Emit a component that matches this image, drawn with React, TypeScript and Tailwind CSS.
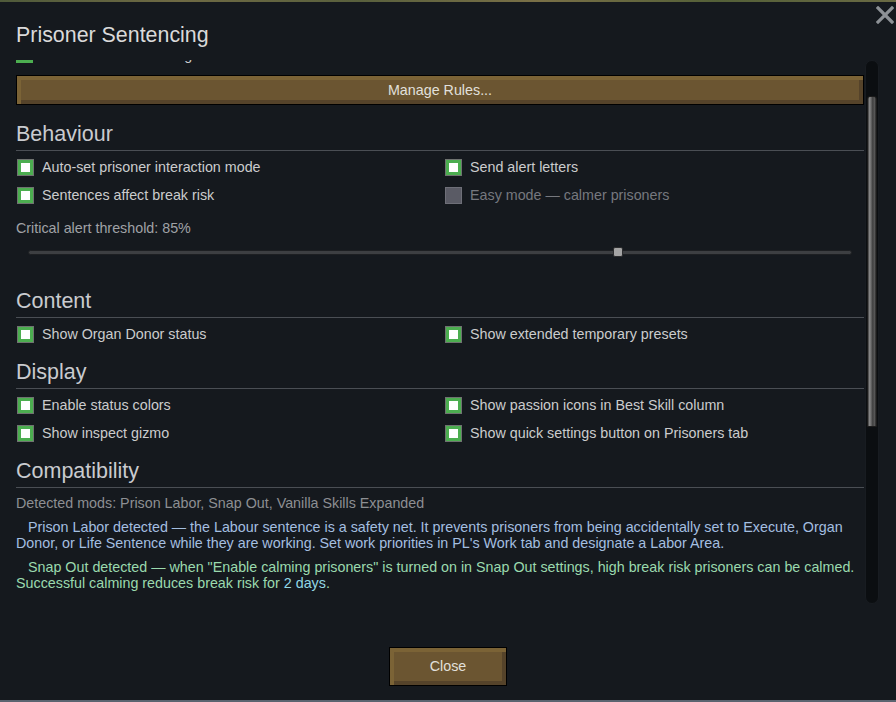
import type { ReactNode } from 'react'

function Box({ on = true, disabled = false }: { on?: boolean; disabled?: boolean }) {
    if (disabled) {
        return <span className="ml-px w-[17px] h-[17px] shrink-0 border border-[#6e6f78] bg-[#5a5b65]" />
    }
    return (
        <span className="ml-px w-[17px] h-[17px] shrink-0 border border-[#6f7370] bg-[#4cae50] flex items-center justify-center">
            {on && <span className="w-[9px] h-[9px] bg-white" />}
        </span>
    )
}

function Row({ label, disabled = false }: { label: string; disabled?: boolean }) {
    return (
        <div className="h-7 flex items-center gap-2">
            <Box disabled={disabled} />
            <span className={disabled ? 'text-[#76787e]' : 'text-[#cbcccd]'}>{label}</span>
        </div>
    )
}

function Section({ title, className = '', children }: { title: string; className?: string; children?: ReactNode }) {
    return (
        <div className={className}>
            <div className="text-[21.5px] leading-[26px] text-[#c9cbcf]">{title}</div>
            <div className="mt-[3px] h-px bg-[#4a4e54]" />
            {children}
        </div>
    )
}

function Pair({ left, right }: { left: ReactNode; right: ReactNode }) {
    return (
        <div className="grid grid-cols-[428px_1fr]">
            {left}
            {right}
        </div>
    )
}

function RimButton({ label, className = '' }: { label: string; className?: string }) {
    return (
        <button
            className={`border border-black bg-[#6b5531] text-[14.3px] text-[#e2e0dc] shadow-[inset_4px_4px_0_#7b6336,inset_-4px_-4px_0_#55432a] flex items-center justify-center ${className}`}
        >
            {label}
        </button>
    )
}

export default function App() {
    return (
        <div className="w-[896px] h-[702px] bg-[#15191e] flex flex-col relative overflow-hidden font-['Liberation_Sans',Arial,sans-serif] text-[14.3px]">
            {/* map texture peeking above the window */}
            <div className="h-[2px] bg-[linear-gradient(90deg,#4f5a3a,#6f6a44_20%,#59603d_40%,#7a7047_60%,#546038_80%,#6a6a44)]" />

            {/* Title */}
            <div className="h-[58px] px-4 pt-5">
                <div className="text-[21.4px] leading-[26px] text-[#dadada]">Prisoner Sentencing</div>
            </div>

            {/* Scroll view */}
            <div className="h-[544px] pl-4 flex">
                <div className="w-[848px] overflow-hidden leading-5">
                    {/* row scrolled out of view */}
                    <div className="-mt-[14px] h-[17px] flex items-center gap-2">
                        <span className="w-[17px] h-[17px] bg-[#4cae50]" />
                        <span className="ml-px text-[#cbcccd]">Enable auto-sentencing</span>
                    </div>

                    <RimButton label="Manage Rules..." className="mt-3 w-full h-[30px]" />

                    <Section title="Behaviour" className="mt-4">
                        <div className="mt-[2px]">
                            <Pair left={<Row label="Auto-set prisoner interaction mode" />} right={<Row label="Send alert letters" />} />
                            <Pair
                                left={<Row label="Sentences affect break risk" />}
                                right={<Row label="Easy mode — calmer prisoners" disabled />}
                            />
                        </div>
                        <div className="mt-[9px] h-5 text-[#a0a2a6]">Critical alert threshold: 85%</div>
                        <div className="mt-[6px] h-4 px-3 flex items-center">
                            <div className="relative w-full h-[5px] rounded-full bg-[#3d3f42] border border-[#1d1f22]">
                                <div className="absolute left-[584px] top-1/2 -translate-y-1/2 w-[10px] h-[10px] rounded-[2px] bg-[#a4a4a4] border border-[#2b2c2e]" />
                            </div>
                        </div>
                    </Section>

                    <Section title="Content" className="mt-[28px]">
                        <div className="mt-[2px]">
                            <Pair left={<Row label="Show Organ Donor status" />} right={<Row label="Show extended temporary presets" />} />
                        </div>
                    </Section>

                    <Section title="Display" className="mt-[11px]">
                        <div className="mt-[2px]">
                            <Pair left={<Row label="Enable status colors" />} right={<Row label="Show passion icons in Best Skill column" />} />
                            <Pair left={<Row label="Show inspect gizmo" />} right={<Row label="Show quick settings button on Prisoners tab" />} />
                        </div>
                    </Section>

                    <Section title="Compatibility" className="mt-[11px]">
                        <div className="mt-[5px] h-5 text-[#8d8f93]">Detected mods: Prison Labor, Snap Out, Vanilla Skills Expanded</div>
                        <p className="mt-[6px] leading-4 indent-3 text-[#a4bfe0]">
                            Prison Labor detected — the Labour sentence is a safety net. It prevents prisoners from being accidentally set to Execute, Organ
                            Donor, or Life Sentence while they are working. Set work priorities in PL's Work tab and designate a Labor Area.
                        </p>
                        <p className="mt-2 leading-4 indent-3 text-[#9bdaae]">
                            Snap Out detected — when "Enable calming prisoners" is turned on in Snap Out settings, high break risk prisoners can be calmed.
                            Successful calming reduces break risk for <span className="text-[#92d6e4]">2 days</span>.
                        </p>
                    </Section>
                </div>

                {/* Scrollbar */}
                <div className="ml-px w-[14px] h-full rounded-full bg-[#0b0e11] border border-[#181c21] flex flex-col items-center pt-[35px]">
                    <div className="w-[10px] h-[331px] rounded-t-[3px] border border-[#1c1c1c] bg-[linear-gradient(90deg,#3a3a3a,#8a8a8a_20%,#666_40%,#3e3e3e_60%,#5a5a5a_80%,#262626)]" />
                </div>
            </div>

            {/* Footer */}
            <div className="flex-1 flex justify-center pt-[43px]">
                <RimButton label="Close" className="w-[118px] h-[39px]" />
            </div>
            <div className="h-[2px] bg-[#5b6470]" />

            {/* Close X */}
            <svg className="absolute left-[876px] top-[6px]" width="18" height="18" viewBox="0 0 18 18">
                <path d="M2 2 L16 16 M16 2 L2 16" stroke="#8d9196" strokeWidth="3.2" strokeLinecap="square" />
            </svg>
        </div>
    )
}
